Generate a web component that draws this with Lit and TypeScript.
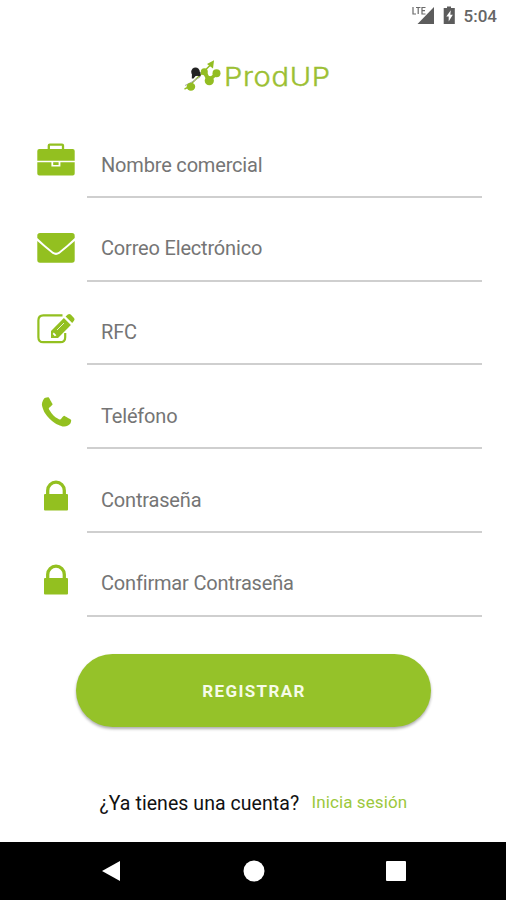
import { LitElement, html, css, svg } from "lit";
import { customElement } from "lit/decorators.js";

const icons = {
  briefcase: svg`
    <path d="M12.800 9V5.600q0-1 1-1H26q1 0 1 1V9" fill="none" stroke="currentColor" stroke-width="2.300"/>
    <path d="M3.300 9H36.700q2 0 2 2V20.700H1.300V11q0-2 2-2Z"/>
    <path d="M1.300 22.300H15.400V26.500H24.400V22.300H38.700V33.500q0 2-2 2H3.300q-2 0-2-2Z"/>
    <path d="M17.200 22.200h5.400v2.800h-5.400Z"/>`,
  envelope: svg`
    <path d="M4 9H36q2.700 0 2.700 2.700V14Q31 21.500 23 27.800q-3 2-6 0Q9 21.500 1.300 14V11.700Q1.300 9 4 9Z"/>
    <path d="M1.300 17Q8 23 16.500 29.800q3.500 2.200 7 0Q32 23 38.700 17V36q0 2.700-2.700 2.700H4Q1.300 38.700 1.300 36Z"/>`,
  edit: svg`
    <path d="M26.500 7.300H7.300Q2.400 7.300 2.400 12.300V29.200Q2.400 34.200 7.300 34.200H24.300Q29.200 34.200 29.200 29.200V25" fill="none" stroke="currentColor" stroke-width="2.200"/>
    <path d="M27.900 10.100 34.900 17.100 22 30H15V23Z" stroke="#fff" stroke-width="2" paint-order="stroke"/>
    <path d="M29.600 8.500 31.800 6.600q1.500-1.200 2.900 0L38 10q1.200 1.300 0 2.700L36.200 15.100Z"/>
    <path d="M17.800 24.600 20.400 27.200 18.900 28.300 16.700 26.100Z" fill="#fff"/>
    <path d="M21 22 28 15" stroke="#fff" stroke-width=".8"/>`,
  phone: svg`
    <path transform="translate(5.900 6.200) scale(.0208)" d="M1408 1112q0 27-10 70.500t-20.500 68.500q-21 50-122 106-94 51-186 51-27 0-53-3.500t-57.500-12.500-47-14.500-55.500-20.500-49-18q-98-35-175-83-127-79-264-216t-216-264q-48-77-83-175-3-9-18-49t-20.500-55.500-14.500-47-12.500-57.500-3.500-53q0-92 51-186 56-101 106-122 25-10 68.500-20.500t70.500-10.500q14 0 21 3 18 6 53 76 11 19 30 54t35 63.500 31 53.500q3 4 17.500 25t21.500 35.500 7 28.500q0 20-28.500 50t-62 55-62 53-28.500 46q0 9 5 22.500t8.500 20.500 14 24 11.500 19q76 137 174 235t235 174q2 1 19 11.500t24 14 20.500 8.500 22.500 5q18 0 46-28.500t53-62 55-62 50-28.500q14 0 28.500 7t35.500 21.500 25 17.500q25 15 53.500 31t63.500 35 54 30q70 35 76 53 3 7 3 21z"/>`,
  lock: svg`
    <path d="M11.700 19.500V15.500a8.300 8.300 0 0 1 16.600 0V19.500" fill="none" stroke="currentColor" stroke-width="3.300"/>
    <rect x="8" y="18.900" width="24" height="16.500" rx="1"/>`,
};

const fields = [
  { icon: icons.briefcase, label: "Nombre comercial" },
  { icon: icons.envelope, label: "Correo Electrónico" },
  { icon: icons.edit, label: "RFC" },
  { icon: icons.phone, label: "Teléfono" },
  { icon: icons.lock, label: "Contraseña" },
  { icon: icons.lock, label: "Confirmar Contraseña" },
];

@customElement("app-root")
export class AppRoot extends LitElement {
  static styles = css`
    :host {
      display: flex;
      flex-direction: column;
      height: 900px;
      background: #fff;
      font-family: Roboto, sans-serif;
      overflow: hidden;
    }
    * { box-sizing: border-box; }
    svg { display: block; flex: none; }
    .status {
      height: 32px;
      display: flex;
      justify-content: flex-end;
      align-items: center;
      padding-right: 9px;
      color: #666;
      font-size: 17px;
      font-weight: 500;
    }
    .brand {
      height: 82px;
      display: flex;
      align-items: flex-start;
      padding: 26px 0 0 182px;
    }
    .name {
      margin-left: 2px;
      font: 300 26px/37px Inter, sans-serif;
      letter-spacing: 0.6px;
      color: #9cc033;
      -webkit-text-stroke: 0.4px #9cc033;
      transform: scaleX(1.12);
      transform-origin: left;
    }
    .field {
      height: 83.8px;
      display: flex;
      padding: 0 24px 0 36px;
    }
    .icon { margin-top: 26px; color: #93c020; fill: currentColor; }
    .input {
      flex: 1;
      margin-left: 11px;
      padding: 37.5px 0 0 14px;
      border-bottom: 2px solid #cfcfcf;
      font-size: 20px;
      line-height: 26px;
      color: #757575;
      letter-spacing: -0.18px;
    }
    .submit {
      align-self: flex-start;
      width: 355px;
      height: 73px;
      margin: 37px 0 0 76px;
      padding: 2px 0 0 1px;
      border: 0;
      border-radius: 37px;
      background: #95c229;
      box-shadow: 0 2px 3px rgba(0, 0, 0, 0.32);
      color: #f6fbe8;
      font: 700 17px/71px Roboto, sans-serif;
      letter-spacing: 1.35px;
    }
    .login {
      display: flex;
      align-items: baseline;
      margin-top: 64px;
      padding-left: 99.5px;
      line-height: 26px;
      white-space: nowrap;
    }
    .question { width: 200px; font-size: 19.5px; color: #111; letter-spacing: 0.06px; }
    .link { margin: 0 0 2px 12px; align-self: flex-start; line-height: 23px; font-size: 17px; color: #9cc83c; letter-spacing: 0.1px; }
    .nav {
      height: 58px;
      margin-top: auto;
      background: #000;
      display: flex;
      justify-content: space-between;
      align-items: center;
      padding: 0 100px 0 101px;
      fill: #fff;
    }
  `;

  render() {
    return html`
      <div class="status">
        <svg width="54" height="32" viewBox="0 0 54 32" fill="#5c5c5c">
          <path d="M24 7V24H7.500Z"/>
          <path d="M3 7V14H6M6 7.500H10.500M8.200 7.500V14M15.500 7.500H12V14H15.500M12 10.700H15" fill="none" stroke="#6a6a6a" stroke-width="1.200"/>
          <path d="M37 6.500h4V8h3.800V24H33.700V8H37Z"/>
          <path d="M40.800 10.200 36.300 16.600H38.700V21.500L42.800 14.800H40.300Z" fill="#fff"/>
        </svg>
        <span>5:04</span>
      </div>
      <div class="brand">
        <svg width="40" height="36" viewBox="0 0 40 36">
          <path d="M2.500 31Q6 30 9 26L29.500 6" fill="none" stroke="#93bd22" stroke-width="1.500"/>
          <path d="M22.500 14 27 22.500" fill="none" stroke="#93bd22" stroke-width="4"/>
          <path d="M27.500 22 34.500 15.500" fill="none" stroke="#93bd22" stroke-width="3.500"/>
          <path d="M3 27.500 9 24.500 18 19" fill="none" stroke="#aaa" stroke-width="1"/>
          <circle cx="13.500" cy="13.800" r="4.300" fill="#222"/>
          <path d="M10 14 9.800 20.500 11.500 20.500 14 17.500 18.500 18.500V14Z" fill="#222"/>
          <g fill="#93bd22">
            <path d="M25 6 32 2.200 31 10.500Z"/>
            <circle cx="22.300" cy="13.700" r="3.500"/>
            <circle cx="34.500" cy="15.200" r="4"/>
            <circle cx="27.300" cy="22.700" r="4.600"/>
            <ellipse cx="8.900" cy="28.700" rx="4.300" ry="4"/>
          </g>
        </svg>
        <span class="name">ProdUP</span>
      </div>
      ${fields.map(
        (f) => html`
          <div class="field">
            <svg class="icon" width="40" height="40" viewBox="0 0 40 40">${f.icon}</svg>
            <div class="input">${f.label}</div>
          </div>
        `
      )}
      <button class="submit">REGISTRAR</button>
      <div class="login">
        <span class="question">¿Ya tienes una cuenta?</span>
        <span class="link">Inicia sesión</span>
      </div>
      <div class="nav">
        <svg width="20" height="22" viewBox="0 0 20 22"><path d="M1 11 19 1V21Z"/></svg>
        <svg width="22" height="22" viewBox="0 0 22 22"><circle cx="11" cy="11" r="10.500"/></svg>
        <svg width="20" height="20" viewBox="0 0 20 20"><rect width="20" height="20" rx="1"/></svg>
      </div>
    `;
  }
}
